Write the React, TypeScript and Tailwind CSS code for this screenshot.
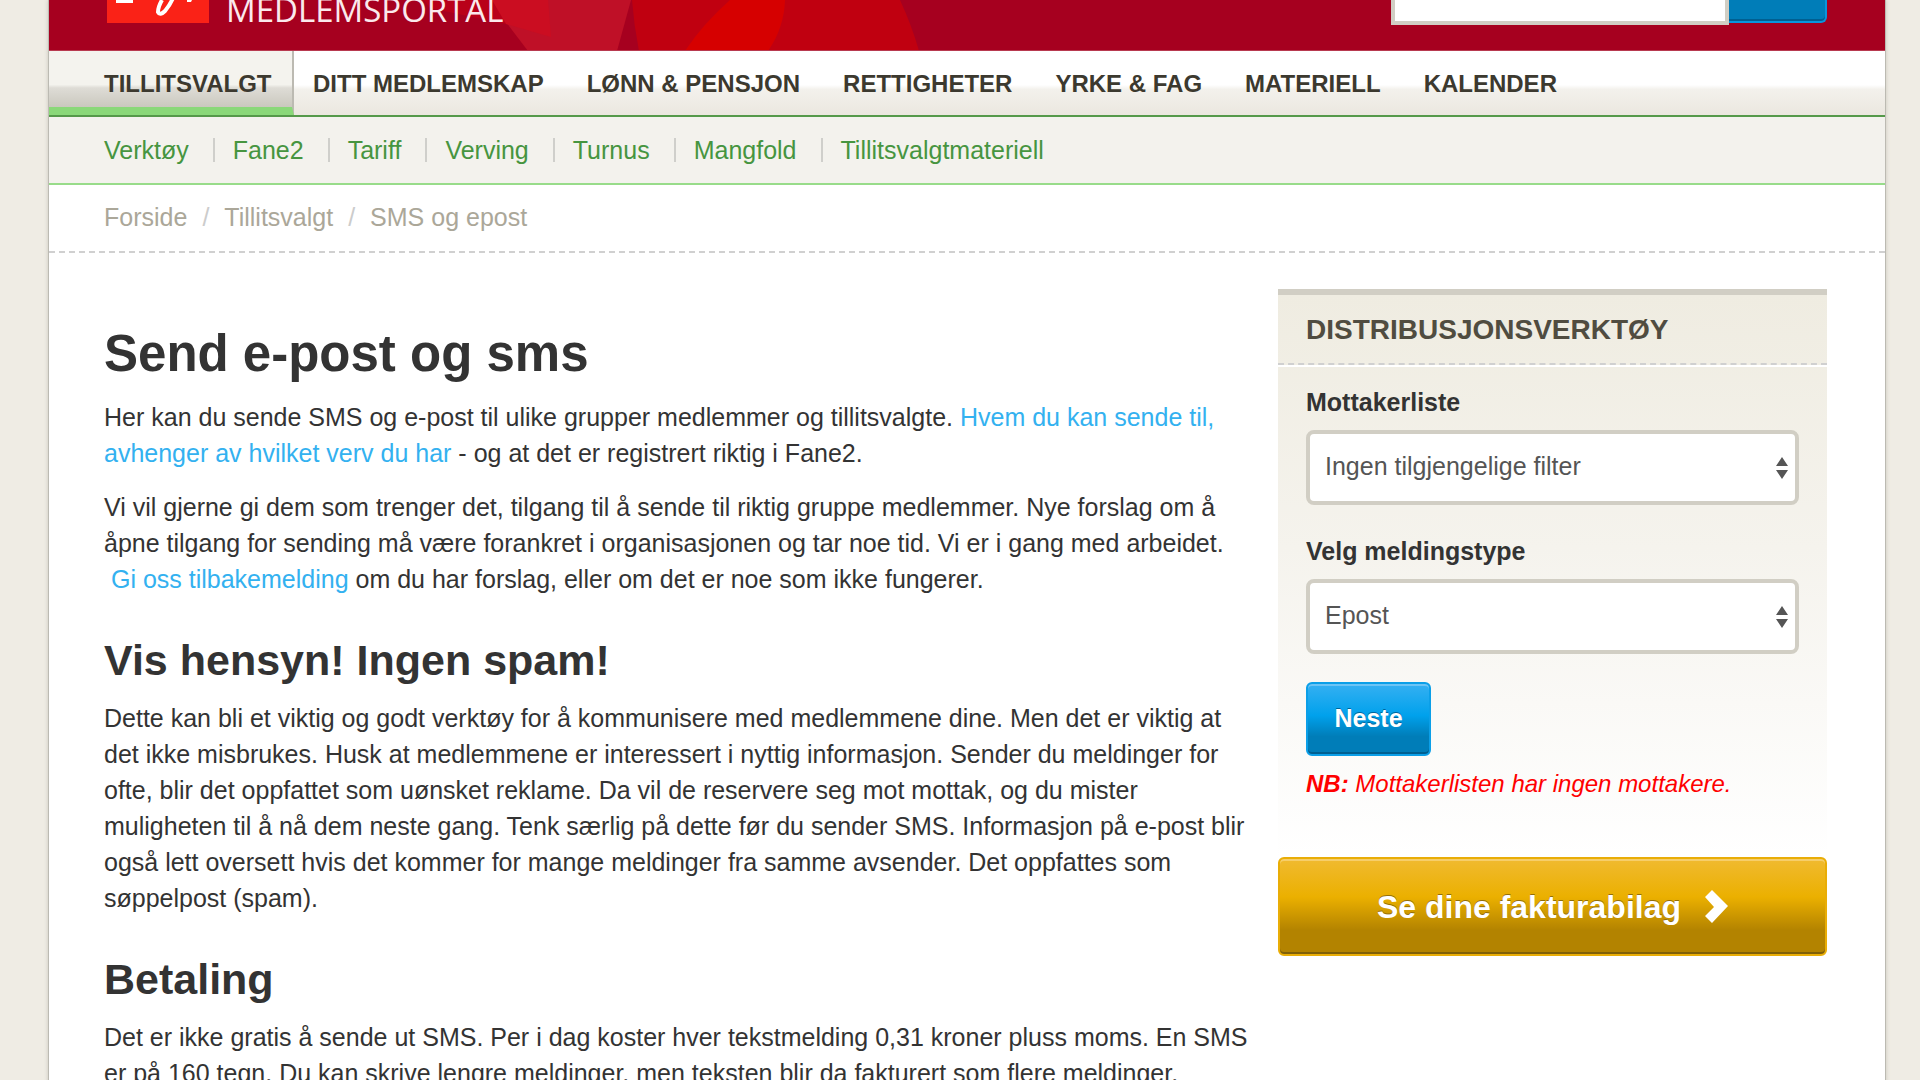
const menu = ["DITT MEDLEMSKAP", "LØNN & PENSJON", "RETTIGHETER", "YRKE & FAG", "MATERIELL", "KALENDER"];
const tools = ["Verktøy", "Fane2", "Tariff", "Verving", "Turnus", "Mangfold", "Tillitsvalgtmateriell"];

const Header = () => (
  <header className="relative h-[51px] overflow-hidden bg-[#a6001f] border-b border-[#b83a50]">
    <svg className="absolute left-[375px] top-0" width="505" height="51" viewBox="424 0 505 51" aria-hidden="true">
      <path d="M490 0H631L617 51H528L506 22Z" fill="#bf1027" />
      <path d="M424 0H495L506 24L430 8Z" fill="#b90019" />
      <path d="M492 0H548L551 37L506 24Z" fill="#cb0d21" />
      <path d="M632 0H900Q912 26 919 51H639Q634 26 632 0Z" fill="#c00010" />
      <path d="M730 0H785Q784 28 768 51H685Q702 25 730 0Z" fill="#d60000" />
    </svg>
    <div className="relative flex justify-between px-[58px]">
      <a href="#" className="flex gap-[17px]">
        <svg width="102" height="24" viewBox="0 0 102 24" aria-hidden="true">
          <rect width="102" height="23" fill="#fa2217" />
          <path d="M9 0H26V3H9ZM80 0H85L84 2H80Z" fill="#fff" />
          <path d="M55 0Q51 7 51 12Q53 16 58 11Q63 5 66 -2" fill="none" stroke="#fff" strokeWidth="4" />
        </svg>
        <span className="-mt-2 h-9 font-['Open_Sans',sans-serif] text-[33px] leading-9 text-[#fbe9ec]">MEDLEMSPORTAL</span>
      </a>
      <form className="flex">
        <input aria-label="Søk" className="h-[25px] w-[338px] border-4 border-t-0 border-[#d1cec4] bg-white" />
        <button type="button" aria-label="Søk" className="h-[23px] w-[98px] rounded-br-md border-b-2 border-r-2 border-[#0995dc] bg-[#007db8] shadow-[inset_0_-2px_0_#005f91]" />
      </form>
    </div>
  </header>
);

const MainMenu = () => (
  <nav className="flex h-[66px] border-b-2 border-[#55994a] bg-[linear-gradient(#fff_53%,#f3f1ec_60%,#ebe7df)] text-2xl font-bold text-[#3c392f]">
    <a href="#" className="flex w-[245px] items-center border-b-8 border-r-2 border-b-[#8ad879] border-r-[#bcbab2] bg-[linear-gradient(#f4f3ee_60%,#dedcd6_66%,#cac8be)] pl-[55px] pt-[9px]">
      TILLITSVALGT
    </a>
    <div className="flex items-center gap-[43px] pl-[19px] pt-px">
      {menu.map((item) => (
        <a href="#" key={item}>{item}</a>
      ))}
    </div>
  </nav>
);

const SelectBox = ({ id, label, value }: { id: string; label: string; value: string }) => (
  <div>
    <label htmlFor={id} className="mb-3 block font-bold leading-8">{label}</label>
    <div className="relative">
      <select id={id} className="h-[75px] w-full appearance-none rounded-lg border-4 border-[#d1cec4] bg-white pb-0.5 pl-[15px] text-[#555]">
        <option>{value}</option>
      </select>
      <svg className="pointer-events-none absolute right-[11px] top-[27px]" width="12" height="22" viewBox="0 0 12 22" aria-hidden="true">
        <path d="M6 0L12 9H0ZM6 22L0 13H12Z" fill="#555" />
      </svg>
    </div>
  </div>
);

const Sidebar = () => (
  <aside className="mt-9 w-[549px] shrink-0">
    <section className="h-[568px] border-t-[6px] border-[#d1cec4] bg-[linear-gradient(#efece1,#f5f3ed_45%,#fff)]">
      <h2 className="h-[70px] border-b-2 border-dashed border-[#d0d0d0] px-7 text-[28px] font-bold leading-[70px] text-[#504c40]">
        DISTRIBUSJONSVERKTØY
      </h2>
      <form className="border-t-2 border-white px-7 pt-[19px]">
        <div className="mb-7 flex flex-col gap-[30px]">
          <SelectBox id="receivers" label="Mottakerliste" value="Ingen tilgjengelige filter" />
          <SelectBox id="type" label="Velg meldingstype" value="Epost" />
        </div>
        <button
          type="button"
          className="block h-[74px] w-[125px] rounded-md border-2 border-[#0b9fe8] bg-[linear-gradient(#35b0f2,#00a1ec_45%,#007db8_75%)] font-bold text-white shadow-[inset_0_-2px_0_#005f91,inset_0_2px_0_#6cc4f5] [text-shadow:0_-1px_0_#00649a]"
        >
          Neste
        </button>
        <p className="mt-2.5 text-2xl italic leading-9 text-[#f00]"><strong>NB:</strong> Mottakerlisten har ingen mottakere.</p>
      </form>
    </section>
    <button
      type="button"
      className="flex h-[99px] w-full items-center justify-center gap-6 rounded-md border-2 border-[#e9ad06] bg-[linear-gradient(#f0ba30,#ebb000_40%,#b38300_75%)] text-[32px] font-bold text-white shadow-[inset_0_-2px_0_#806008,inset_0_2px_0_#f6ce6a] [text-shadow:0_-1px_0_#936d0a]"
    >
      Se dine fakturabilag
      <svg width="23" height="33" viewBox="0 0 23 33" aria-hidden="true">
        <path d="M7 0L23 16L7 33L0 26L9 17L0 7Z" fill="#fff" />
      </svg>
    </button>
  </aside>
);

const link = "text-[#33b1f0]";

const App = () => (
  <div className="h-screen overflow-hidden bg-[#efece4] pl-12 pr-[34px] font-['Liberation_Sans',sans-serif] text-[25px] text-[#333]">
    <div className="min-h-full border-x border-[#bcbab2] bg-white shadow-[0_0_4px_#c9c6bd]">
      <Header />
      <MainMenu />
      <nav className="flex h-[68px] items-center border-b-2 border-[#98dc8a] bg-[#f3f2ed] pl-[55px] text-[#469540]">
        {tools.map((item, i) => (
          <a href="#" key={item} className={i ? "ml-6 border-l-2 border-[#cfcfcb] pl-[18px] leading-6" : "leading-6"}>{item}</a>
        ))}
      </nav>
      <nav className="flex h-[68px] items-center gap-[15px] border-b-2 border-dashed border-[#d0d0d0] pl-[55px] text-[#aba799]">
        <a href="#">Forside</a>
        <span className="text-[#ccc]">/</span>
        <a href="#">Tillitsvalgt</a>
        <span className="text-[#ccc]">/</span>
        <span>SMS og epost</span>
      </nav>
      <div className="flex pl-[55px] pr-[58px]">
        <main className="min-w-0 flex-1 pt-[71px] leading-9">
          <h1 className="mb-[15px] text-[51px] font-bold leading-[60px]">Send e-post og sms</h1>
          <p className="mb-[18px]">
            Her kan du sende SMS og e-post til ulike grupper medlemmer og tillitsvalgte. <a href="#" className={link}>Hvem du kan sende til,<br />avhenger av hvilket verv du har</a> - og at det er registrert riktig i Fane2.
          </p>
          <p>
            Vi vil gjerne gi dem som trenger det, tilgang til å sende til riktig gruppe medlemmer. Nye forslag om å<br />
            åpne tilgang for sending må være forankret i organisasjonen og tar noe tid. Vi er i gang med arbeidet.<br />
            &nbsp;<a href="#" className={link}>Gi oss tilbakemelding</a> om du har forslag, eller om det er noe som ikke fungerer.
          </p>
          <h2 className="mb-[13px] mt-9 text-[43px] font-bold leading-[54px]">Vis hensyn! Ingen spam!</h2>
          <p>
            Dette kan bli et viktig og godt verktøy for å kommunisere med medlemmene dine. Men det er viktig at<br />
            det ikke misbrukes. Husk at medlemmene er interessert i nyttig informasjon. Sender du meldinger for<br />
            ofte, blir det oppfattet som uønsket reklame. Da vil de reservere seg mot mottak, og du mister<br />
            muligheten til å nå dem neste gang. Tenk særlig på dette før du sender SMS. Informasjon på e-post blir<br />
            også lett oversett hvis det kommer for mange meldinger fra samme avsender. Det oppfattes som<br />
            søppelpost (spam).
          </p>
          <h2 className="mb-[13px] mt-9 text-[43px] font-bold leading-[54px]">Betaling</h2>
          <p>
            Det er ikke gratis å sende ut SMS. Per i dag koster hver tekstmelding 0,31 kroner pluss moms. En SMS<br />
            er på 160 tegn. Du kan skrive lengre meldinger, men teksten blir da fakturert som flere meldinger.
          </p>
        </main>
        <Sidebar />
      </div>
    </div>
  </div>
);

export default App;
